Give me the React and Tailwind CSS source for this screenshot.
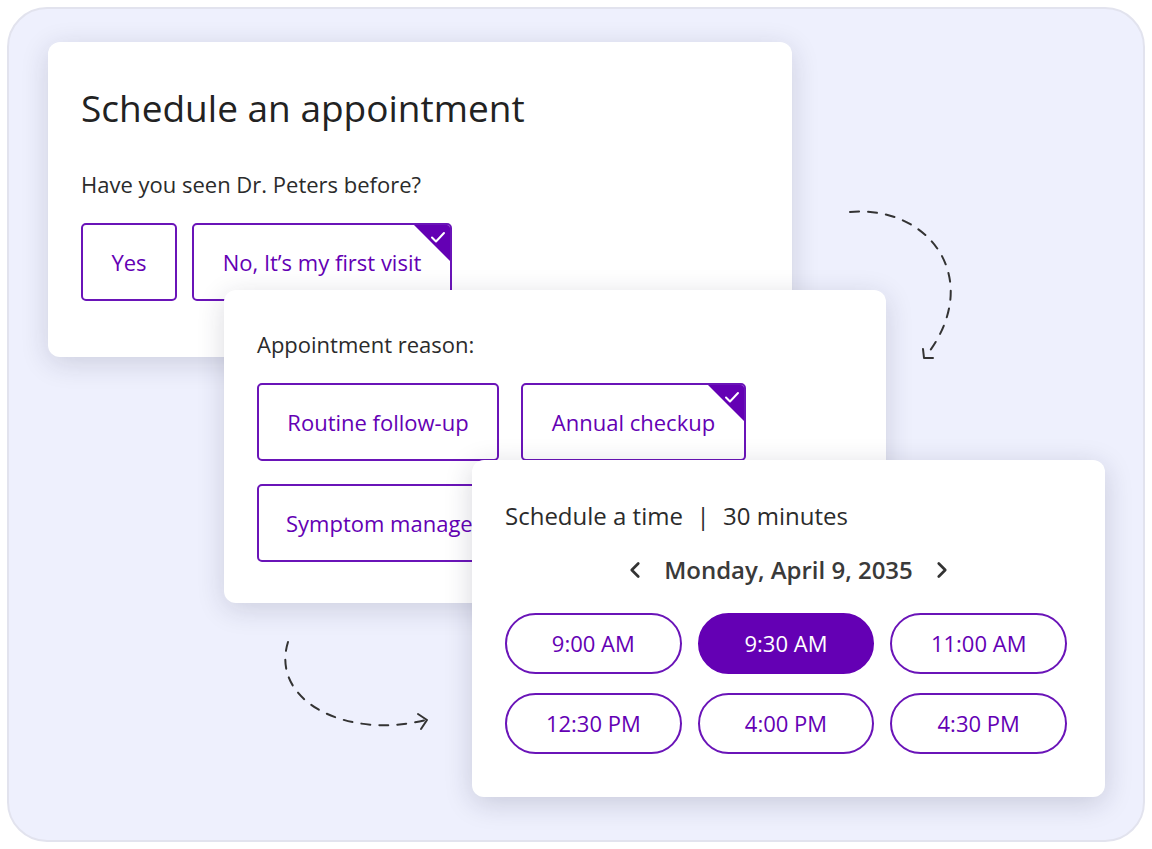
import { ChevronLeft, ChevronRight } from "lucide-react";

const purple = "#6400b4";

function Corner() {
  return (
    <svg className="absolute top-0 right-0" width="36" height="36" viewBox="0 0 36 36">
      <polygon points="0,0 36,0 36,36" fill={purple} />
      <path d="M18 12.5 L22 16.5 L30 8" fill="none" stroke="white" strokeWidth="2" strokeLinecap="round" strokeLinejoin="round" />
    </svg>
  );
}

function Choice({ label, w, checked }) {
  return (
    <div
      className={`relative h-[78px] ${w} shrink-0 flex items-center justify-center border-2 border-[#6a14b8] rounded-[5px] overflow-hidden bg-white text-[22px] text-[#6400b4]`}
    >
      <span className="whitespace-nowrap">{label}</span>
      {checked && <Corner />}
    </div>
  );
}

function Slot({ time, active }) {
  return (
    <div
      className={`h-[61px] rounded-full flex items-center justify-center text-[22px] border-2 ${
        active ? "bg-[#6400b4] border-[#6400b4] text-white" : "bg-white border-[#6a14b8] text-[#6400b4]"
      }`}
    >
      {time}
    </div>
  );
}

export default function App() {
  const times = ["9:00 AM", "9:30 AM", "11:00 AM", "12:30 PM", "4:00 PM", "4:30 PM"];
  return (
    <div
      className="relative w-[1152px] h-[849px] bg-white p-[7px]"
      style={{ fontFamily: "'Open Sans', 'Noto Sans', sans-serif" }}
    >
      <div className="relative w-full h-full rounded-[40px] bg-[#eef0fd] border-2 border-[#e2e3ee] overflow-hidden">
        {/* first card */}
        <div className="absolute left-[39px] top-[33px] w-[744px] h-[315px] bg-white rounded-[12px] shadow-[0_6px_28px_rgba(30,30,60,0.16)] pl-[33px] pt-[43px]">
          <h1 className="text-[37px] leading-[46px] text-[#222]">Schedule an appointment</h1>
          <p className="mt-[38px] text-[22px] leading-[30px] text-[#2b2b2b]">Have you seen Dr. Peters before?</p>
          <div className="mt-[24px] flex gap-[15px]">
            <Choice label="Yes" w="w-[96px]" />
            <Choice label="No, It’s my first visit" w="w-[260px]" checked />
          </div>
        </div>

        {/* second card */}
        <div className="absolute left-[215px] top-[281px] w-[662px] h-[313px] bg-white rounded-[12px] shadow-[0_6px_28px_rgba(30,30,60,0.16)] pl-[33px] pt-[39px]">
          <p className="text-[22px] leading-[30px] text-[#2b2b2b]">Appointment reason:</p>
          <div className="mt-[24px] flex flex-wrap gap-x-[22px] gap-y-[23px] w-[600px]">
            <Choice label="Routine follow-up" w="w-[242px]" />
            <Choice label="Annual checkup" w="w-[225px]" checked />
            <Choice label="Symptom management" w="w-auto px-[27px]" />
          </div>
        </div>

        {/* third card */}
        <div className="absolute left-[463px] top-[451px] w-[633px] h-[337px] bg-white rounded-[12px] shadow-[0_6px_28px_rgba(30,30,60,0.18)] px-[33px] pt-[40px]">
          <p className="text-[24px] leading-[32px] text-[#2b2b2b] whitespace-pre">Schedule a time  <span className="px-[1px]">|</span>  30 minutes</p>
          <div className="mt-[22px] flex items-center justify-center gap-[10px] text-[#333]">
            <ChevronLeft size={26} strokeWidth={2.5} />
            <span className="px-[6px] text-[24px] leading-[32px] font-semibold text-[#3a3a3a]">Monday, April 9, 2035</span>
            <ChevronRight size={26} strokeWidth={2.5} />
          </div>
          <div className="mt-[27px] grid grid-cols-3 gap-x-[16px] gap-y-[19px] w-[562px]">
            {times.map((t, i) => (
              <Slot key={t} time={t} active={i === 1} />
            ))}
          </div>
        </div>
      </div>

      {/* dashed arrows */}
      <svg className="absolute left-0 top-0 pointer-events-none" width="1152" height="849" viewBox="0 0 1152 849">
        <g fill="none" stroke="#333" strokeWidth="2" strokeLinecap="round">
          <path d="M850 212 C 930 205, 985 280, 926 356" strokeDasharray="9 9" />
          <path d="M924 358 L923 349 M924 358 L933 358" />
          <path d="M288 642 C 270 700, 345 740, 426 720" strokeDasharray="9 9" />
          <path d="M427 720 L418 714 M427 720 L421 729" />
        </g>
      </svg>
    </div>
  );
}
